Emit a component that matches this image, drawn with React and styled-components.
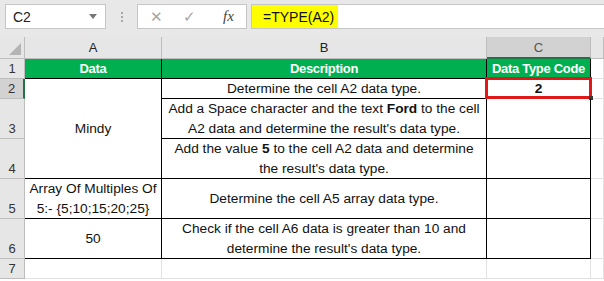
import styled, { createGlobalStyle } from 'styled-components';

const Global = createGlobalStyle`
  html, body { margin: 0; padding: 0; background: #ffffff; }
  body { font-family: 'Liberation Sans', Arial, sans-serif; }
`;

const Pagina = styled.div`
  width: 604px;
  height: 281px;
  overflow: hidden;
  background: #ffffff;
`;

const BarraFormula = styled.div`
  height: 37px;
  background: #e8e8e8;
  display: flex;
  align-items: flex-start;
  padding-top: 4px;
  padding-left: 5px;
  box-sizing: border-box;
`;

const CaixaNome = styled.div`
  width: 101px;
  height: 25px;
  box-sizing: border-box;
  background: #fff;
  border: 1px solid #c6c6c6;
  display: flex;
  align-items: center;
  justify-content: space-between;
  padding: 0 8px 0 7px;
  font-size: 14px;
  color: #222;
`;

const Seta = styled.span`
  width: 0;
  height: 0;
  border-left: 4px solid transparent;
  border-right: 4px solid transparent;
  border-top: 5px solid #777;
`;

const Pontos = styled.div`
  width: 31px;
  height: 25px;
  display: flex;
  flex-direction: column;
  align-items: center;
  justify-content: center;
  gap: 2px;
  span {
    width: 2px;
    height: 2px;
    background: #a8a8a8;
  }
`;

const Botoes = styled.div`
  width: 110px;
  height: 25px;
  box-sizing: border-box;
  background: #fff;
  border: 1px solid #c6c6c6;
  display: flex;
  align-items: center;
  padding-left: 12px;
  gap: 20px;
  color: #a6a6a6;
  font-size: 15px;
`;

const Fx = styled.span`
  font-family: 'Liberation Serif', serif;
  font-style: italic;
  font-size: 15px;
  color: #444;
  margin-left: 7px;
`;

const Entrada = styled.div`
  flex: 1;
  height: 25px;
  box-sizing: border-box;
  background: #fff;
  border: 1px solid #c6c6c6;
  border-right: 0;
  margin-left: 4px;
  display: flex;
`;

const Destaque = styled.span`
  background: #ffff00;
  padding: 0 4px 0 11px;
  display: flex;
  align-items: center;
  font-size: 14px;
  color: #111;
`;

const Grade = styled.div`
  display: grid;
  grid-template-columns: 25px 137px 325px 104px 13px;
  grid-template-rows: 22px 20px 20px 40px 40px 40px 40px 20px;
  font-size: 13.7px;
  color: #111;
`;

const Canto = styled.div`
  background: #e6e6e6;
  border-right: 1px solid #bdbdbd;
  border-bottom: 1px solid #bdbdbd;
  position: relative;
  &::after {
    content: '';
    position: absolute;
    right: 3px;
    bottom: 3px;
    border-left: 12px solid transparent;
    border-bottom: 12px solid #b4b4b4;
  }
`;

const CabecalhoColuna = styled.div`
  background: ${p => (p.$ativo ? '#d2d2d2' : '#e6e6e6')};
  border-right: 1px solid #bdbdbd;
  border-bottom: ${p => (p.$ativo ? '2px solid #217346' : '1px solid #bdbdbd')};
  display: flex;
  align-items: center;
  justify-content: center;
  font-size: 13px;
  color: ${p => (p.$ativo ? '#555' : '#222')};
  box-sizing: border-box;
`;

const NumeroLinha = styled.div`
  background: ${p => (p.$ativo ? '#d2d2d2' : '#e6e6e6')};
  border-bottom: 1px solid #bdbdbd;
  border-right: ${p => (p.$ativo ? '2px solid #217346' : '1px solid #bdbdbd')};
  display: flex;
  align-items: flex-end;
  justify-content: center;
  padding-bottom: 2px;
  box-sizing: border-box;
  font-size: 13px;
  color: #333;
`;

const Titulo = styled.div`
  background: #00b050;
  color: #fff;
  font-weight: bold;
  border-right: 1px solid #000;
  border-bottom: 1px solid #000;
  display: flex;
  align-items: center;
  justify-content: center;
  font-size: 13px;
  letter-spacing: -0.3px;
`;

const Celula = styled.div`
  border-right: 1px solid #000;
  border-bottom: 1px solid #000;
  display: flex;
  align-items: center;
  justify-content: center;
  text-align: center;
  line-height: 20px;
  position: relative;
  font-weight: ${p => (p.$negrito ? 'bold' : 'normal')};
  ${p => p.$area && `grid-area: ${p.$area};`}
`;

const Selecao = styled.div`
  position: absolute;
  left: -2px;
  top: -2px;
  right: -2px;
  bottom: -1px;
  border: 3px solid #e01818;
  &::after {
    content: '';
    position: absolute;
    right: -4px;
    bottom: -4px;
    width: 4px;
    height: 4px;
    background: #3a3a3a;
  }
`;

const Vazio = styled.div`
  border-right: 1px solid #e2e2e2;
  border-bottom: 1px solid #e2e2e2;
`;

export default function App() {
  return (
    <Pagina>
      <Global />
      <BarraFormula>
        <CaixaNome>
          <span>C2</span>
          <Seta />
        </CaixaNome>
        <Pontos>
          <span />
          <span />
          <span />
        </Pontos>
        <Botoes>
          <span>✕</span>
          <span>✓</span>
          <Fx>fx</Fx>
        </Botoes>
        <Entrada>
          <Destaque>=TYPE(A2)</Destaque>
        </Entrada>
      </BarraFormula>

      <Grade>
        <Canto />
        <CabecalhoColuna>A</CabecalhoColuna>
        <CabecalhoColuna>B</CabecalhoColuna>
        <CabecalhoColuna $ativo>C</CabecalhoColuna>
        <CabecalhoColuna />

        <NumeroLinha>1</NumeroLinha>
        <Titulo>Data</Titulo>
        <Titulo>Description</Titulo>
        <Titulo>Data Type Code</Titulo>
        <Vazio />

        <NumeroLinha $ativo>2</NumeroLinha>
        <Celula $area="3 / 2 / 6 / 3">
          <span>Mindy</span>
        </Celula>
        <Celula>
          <span>Determine the cell A2 data type.</span>
        </Celula>
        <Celula $negrito>
          <span>2</span>
          <Selecao />
        </Celula>
        <Vazio />

        <NumeroLinha>3</NumeroLinha>
        <Celula>
          <span>
            Add a Space character and the text <b>Ford</b> to the cell
            <br />
            A2 data and determine the result's data type.
          </span>
        </Celula>
        <Celula />
        <Vazio />

        <NumeroLinha>4</NumeroLinha>
        <Celula>
          <span>
            Add the value <b>5</b> to the cell A2 data and determine
            <br />
            the result's data type.
          </span>
        </Celula>
        <Celula />
        <Vazio />

        <NumeroLinha>5</NumeroLinha>
        <Celula>
          <span>
            Array Of Multiples Of
            <br />
            5:- {'{5;10;15;20;25}'}
          </span>
        </Celula>
        <Celula>
          <span>Determine the cell A5 array data type.</span>
        </Celula>
        <Celula />
        <Vazio />

        <NumeroLinha>6</NumeroLinha>
        <Celula>
          <span>50</span>
        </Celula>
        <Celula>
          <span>
            Check if the cell A6 data is greater than 10 and
            <br />
            determine the result's data type.
          </span>
        </Celula>
        <Celula />
        <Vazio />

        <NumeroLinha>7</NumeroLinha>
        <Vazio />
        <Vazio />
        <Vazio />
        <Vazio />
      </Grade>
    </Pagina>
  );
}
